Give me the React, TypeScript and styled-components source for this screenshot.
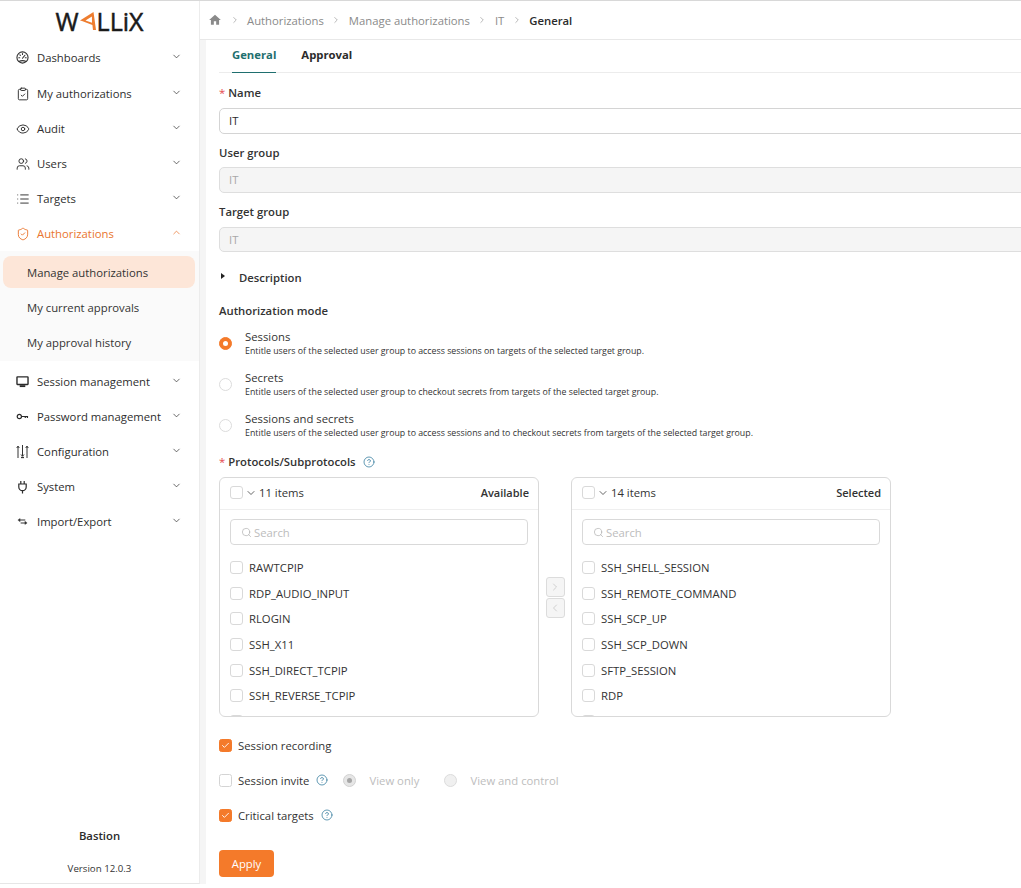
import React from "react";
import styled, { createGlobalStyle } from "styled-components";
import { ChevronDown, ChevronUp, ChevronRight, ChevronLeft, ClipboardCheck, Eye, Users, List, ShieldCheck, Search as SearchIcon, CircleHelp, Check } from "lucide-react";
import { MdHome } from "react-icons/md";

const Global = createGlobalStyle`
  html, body { margin: 0; padding: 0; background: #fff; }
  body { font-family: "Open Sans", "Liberation Sans", sans-serif; font-size: 11px; color: #2b2b2b; overflow: hidden; }
  * { box-sizing: border-box; }
`;

const Page = styled.div`
  width: 1021px; height: 888px; display: flex; overflow: hidden; border-top: 1px solid #d8d8d8;
`;
const Sidebar = styled.aside`
  width: 200px; flex: none; height: 883px; display: flex; flex-direction: column; background: #fff;
  border-bottom: 1px solid #e6e6e6; border-right: 1px solid #ececec;
`;
const LogoBox = styled.div`
  height: 39px; display: flex; align-items: center; justify-content: center;
`;
const LogoText = styled.span`
  font-family: "Open Sans", sans-serif; font-size: 25px; line-height: 30px; font-weight: 400; color: #1a1a1a;
  -webkit-text-stroke: 0.5px #1a1a1a;
`;
const Menu = styled.nav`
  display: flex; flex-direction: column;
`;
const MenuRow = styled.div<{ $active?: boolean }>`
  height: 35px; display: flex; align-items: center; padding: 0 17px 0 16px; gap: 8px;
  font-size: 11.3px; color: ${(p) => (p.$active ? "#e9752e" : "#2e2e2e")};
  svg { flex: none; }
  &:first-child { height: 36px; padding-bottom: 2px; }
`;
const IconSlot = styled.span`
  width: 13px; flex: none; display: flex; justify-content: center;
`;
const ChevronSlot = styled.span`
  display: flex; margin-top: -2px;
`;
const RowLabel = styled.span`
  flex: 1; white-space: nowrap;
`;
const SubMenu = styled.div`
  background: #fafafa; padding: 5px 4px 0 3px; height: 110px; margin-bottom: 3px; display: flex; flex-direction: column;
`;
const SubItem = styled.div<{ $active?: boolean }>`
  flex: none; height: ${(p) => (p.$active ? "32px" : "35px")};
  margin-bottom: ${(p) => (p.$active ? "2px" : "0")};
  display: flex; align-items: center; padding-left: 24px; font-size: 11.3px; color: #333;
  border-radius: 8px; background: ${(p) => (p.$active ? "#fde6d8" : "transparent")};
  padding-top: ${(p) => (p.$active ? "1px" : "0")};
`;
const SidebarFoot = styled.div`
  margin-top: auto; display: flex; flex-direction: column; align-items: center; padding-bottom: 7px;
`;
const Product = styled.div`
  font-size: 11.3px; font-weight: 600; color: #2b2b2b; height: 17px; line-height: 17px;
`;
const Version = styled.div`
  font-size: 9.7px; color: #333; margin-top: 18px; height: 14px; line-height: 14px;
`;
const Main = styled.main`
  flex: 1; min-width: 0; height: 883px; display: flex; flex-direction: column; background: #f5f5f5; overflow: hidden;
`;
const Breadcrumb = styled.header`
  height: 39px; flex: none; background: #fff; border-bottom: 1px solid #e8e8e8; display: flex; align-items: center;
  padding-left: 8px; font-size: 11.3px; color: #8a8a8a;
`;
const CrumbSep = styled.span`
  display: flex; width: 25px; justify-content: center; color: #8f8f8f;
`;
const Current = styled.span`
  color: #2b2b2b; font-weight: 600;
`;
const Content = styled.div`
  flex: 1; margin-left: 6px; background: #fff; padding-left: 13px; overflow: hidden; display: flex; flex-direction: column;
`;
const Tabs = styled.div`
  height: 33px; flex: none; display: flex; border-bottom: 1px solid #ececec; padding-left: 13px; gap: 25px; font-weight: 700; font-size: 11.3px;
`;
const Tab = styled.div<{ $active?: boolean }>`
  height: 33px; line-height: 29px; color: ${(p) => (p.$active ? "#1f6f6f" : "#2b2b2b")};
  border-bottom: 1px solid ${(p) => (p.$active ? "#1f6f6f" : "transparent")};
`;
const Label = styled.div<{ $top: number }>`
  font-weight: 600; font-size: 11.3px; color: #333; margin-top: ${(p) => p.$top}px; height: 16px; line-height: 16px; display: flex; align-items: center; white-space: nowrap; flex: none;
`;
const Star = styled.span`
  color: #e5484d; margin-right: 3px; font-weight: 400;
`;
const TextInput = styled.div<{ $disabled?: boolean; $top: number; $h?: number }>`
  margin-top: ${(p) => p.$top}px; height: ${(p) => p.$h ?? 26}px; width: 812px; flex: none; border: 1px solid ${(p) => (p.$disabled ? "#dedede" : "#d4d4d4")}; border-radius: 5px; padding-left: 9px;
  line-height: ${(p) => (p.$h ?? 26) - 2}px; font-size: 11.3px;
  color: ${(p) => (p.$disabled ? "#a8a8a8" : "#2b2b2b")}; background: ${(p) => (p.$disabled ? "#f5f5f5" : "#fff")};
`;
const Disclosure = styled.div`
  margin-top: 17px; height: 16px; flex: none; display: flex; align-items: center; font-weight: 600; font-size: 11.3px; color: #333;
`;
const Caret = styled.span`
  width: 0; height: 0; border-left: 4px solid #222; border-top: 3px solid transparent; border-bottom: 3px solid transparent; margin: 0 14px 2px 2px;
`;
const RadioGroup = styled.div`
  display: flex; flex-direction: column; margin-top: 10px; gap: 11px; flex: none;
`;
const RadioRow = styled.div`
  display: flex; align-items: center; gap: 13px; height: 30px;
`;
const RadioDot = styled.span<{ $on?: boolean; $disabled?: boolean }>`
  width: 13px; height: 13px; flex: none; border-radius: 50%; margin-top: -2px;
  background: ${(p) => (p.$on ? (p.$disabled ? "#e6e6e6" : "#f47a2a") : p.$disabled ? "#f0f0f0" : "#fff")};
  border: 1px solid ${(p) => (p.$on ? (p.$disabled ? "#d2d2d2" : "#f47a2a") : "#dcdcdc")};
  display: flex; align-items: center; justify-content: center;
  &::after {
    content: ""; display: ${(p) => (p.$on ? "block" : "none")}; width: 5px; height: 5px; border-radius: 50%;
    background: ${(p) => (p.$disabled ? "#a6a6a6" : "#fff")};
  }
`;
const RadioText = styled.div`
  display: flex; flex-direction: column;
`;
const RadioTitle = styled.span`
  font-size: 11.3px; line-height: 15px; color: #333;
`;
const RadioDesc = styled.span`
  font-size: 8.8px; line-height: 15px; color: #333; white-space: nowrap;
`;
const Help = styled(CircleHelp)`
  color: #1f6f93; margin-left: 7px;
`;
const Transfer = styled.div`
  display: flex; align-items: center; margin-top: 7px; flex: none;
`;
const Panel = styled.div`
  width: 320px; height: 240px; flex: none; border: 1px solid #d9d9d9; border-radius: 6px; overflow: hidden; display: flex; flex-direction: column;
`;
const PanelHead = styled.div`
  height: 32px; flex: none; border-bottom: 1px solid #efefef; display: flex; align-items: center; padding: 0 9px 2px 10px; font-size: 11.3px; color: #333;
`;
const Box = styled.span`
  width: 13px; height: 13px; flex: none; border: 1px solid #d9d9d9; border-radius: 3px; background: #fff; display: inline-flex;
`;
const Count = styled.span`
  display: flex; align-items: center; gap: 2px; margin-left: 2px; flex: 1;
`;
const PanelTitle = styled.span`
  font-weight: 600; font-size: 11px;
`;
const SearchBox = styled.div`
  margin: 9px 10px 0; height: 26px; flex: none; border: 1px solid #d9d9d9; border-radius: 4px; display: flex; align-items: center; gap: 2px; padding-left: 10px; color: #bcbcbc; font-size: 11.3px;
`;
const ItemList = styled.div`
  margin-top: 10px; display: flex; flex-direction: column; padding-left: 10px;
`;
const Item = styled.div`
  height: 25.6px; flex: none; display: flex; align-items: center; gap: 6px; font-size: 11.3px; color: #333; white-space: nowrap;
`;
const MoveButtons = styled.div`
  width: 32px; flex: none; display: flex; flex-direction: column; align-items: center; gap: 1px; padding-top: 1px;
`;
const MoveButton = styled.span`
  width: 19px; height: 20px; border: 1px solid #dcdcdc; border-radius: 3px; background: #f5f5f5; display: flex; align-items: center; justify-content: center; color: #b5b5b5;
`;
const OptionRow = styled.div<{ $top: number }>`
  margin-top: ${(p) => p.$top}px; height: 16px; flex: none; display: flex; align-items: center; font-size: 11.3px; color: #333; white-space: nowrap;
`;
const CheckBox = styled.span<{ $on?: boolean }>`
  width: 13px; height: 13px; flex: none; border-radius: 2.5px; margin-right: 6px;
  background: ${(p) => (p.$on ? "#f47a2a" : "#fff")}; border: 1px solid ${(p) => (p.$on ? "#f47a2a" : "#d4d4d4")};
  display: flex; align-items: center; justify-content: center; color: #fff;
`;
const Muted = styled.span<{ $w: number }>`
  color: #bdbdbd; margin-left: 13px; width: ${(p) => p.$w}px;
`;
const GapDot = styled(RadioDot)`
  margin-top: 0; margin-left: 15px;
`;
const GapDotWide = styled(RadioDot)`
  margin-top: 0; margin-left: 0;
`;
const ApplyButton = styled.button`
  margin-top: 27px; width: 55px; height: 27px; flex: none; border: none; border-radius: 4px; background: #f47a2a; color: #fff; font: 400 11.3px "Open Sans", sans-serif; padding: 0;
`;

const GaugeIcon = () => (
  <svg width="13" height="13" viewBox="0 0 14 14" fill="none" stroke="#333" strokeWidth="1.2">
    <circle cx="7" cy="7" r="6" />
    <path d="M7 7.800 9.600 4.600M3 7.200h1M10 7.200h1M4.200 4.200l.5.500M7 2.800v1" strokeLinecap="round" />
    <path d="M3 11.300c2.500-1.200 5.500-1.200 8 0" />
  </svg>
);
const MonitorIcon = () => (
  <svg width="13" height="13" viewBox="0 0 14 14" fill="#2b2b2b">
    <path fillRule="evenodd" d="M1.500 1.300h11a1.200 1.200 0 0 1 1.200 1.200v7.300a1.200 1.200 0 0 1-1.200 1.200h-11a1.200 1.200 0 0 1-1.200-1.200V2.500a1.200 1.200 0 0 1 1.200-1.200Zm.3 1.500v6.700h10.400V2.800Z" />
    <rect x="4" y="11" width="6" height="2" />
  </svg>
);
const KeyIcon = () => (
  <svg width="13" height="13" viewBox="0 0 14 14" fill="none" stroke="#2b2b2b" strokeWidth="1.300">
    <circle cx="3.600" cy="7" r="2.300" />
    <path d="M6 7h7M10 7v1.500M12.300 7v1.500" />
  </svg>
);
const SlidersIcon = () => (
  <svg width="13" height="15" viewBox="0 0 13 15" fill="none" stroke="#333" strokeWidth="1">
    <path d="M2 2v12M6.500 1v11M11 2v12" />
    <path d="M.7 4 2 2.200 3.300 4M5 10.500l1.500 1.800L8 10.500M9.700 4 11 2.200 12.300 4" />
    <path d="M5 13.500h3" strokeWidth="1.300" />
  </svg>
);
const PlugIcon = () => (
  <svg width="13" height="14" viewBox="0 0 13 14" fill="none" stroke="#2b2b2b" strokeWidth="1.200">
    <path d="M2.800 4h7.400v3a3.700 3.700 0 0 1-7.400 0ZM4.800 1v3M8.200 1v3M6.500 10.700V13.500" />
  </svg>
);
const TransferIcon = () => (
  <svg width="13" height="13" viewBox="0 0 14 14" fill="#333" stroke="#333" strokeWidth="1.100">
    <path d="M4 5.500h6M5 8.500h6" />
    <path d="M4.400 3.700V7.300L2 5.500ZM9.600 6.700v3.600L12 8.500Z" strokeWidth="0.400" />
  </svg>
);

const ic = { size: 14, strokeWidth: 1.6, color: "#2b2b2b" };
const chevron = { size: 11, strokeWidth: 1.6, color: "#333" };

const before = [
  { label: "Dashboards", icon: <GaugeIcon /> },
  { label: "My authorizations", icon: <ClipboardCheck {...ic} /> },
  { label: "Audit", icon: <Eye {...ic} /> },
  { label: "Users", icon: <Users {...ic} /> },
  { label: "Targets", icon: <List {...ic} /> },
];
const after = [
  { label: "Session management", icon: <MonitorIcon /> },
  { label: "Password management", icon: <KeyIcon /> },
  { label: "Configuration", icon: <SlidersIcon /> },
  { label: "System", icon: <PlugIcon /> },
  { label: "Import/Export", icon: <TransferIcon /> },
];
const available = ["RAWTCPIP", "RDP_AUDIO_INPUT", "RLOGIN", "SSH_X11", "SSH_DIRECT_TCPIP", "SSH_REVERSE_TCPIP", ""];
const selected = ["SSH_SHELL_SESSION", "SSH_REMOTE_COMMAND", "SSH_SCP_UP", "SSH_SCP_DOWN", "SFTP_SESSION", "RDP", ""];
const modes = [
  { t: "Sessions", d: "Entitle users of the selected user group to access sessions on targets of the selected target group.", on: true },
  { t: "Secrets", d: "Entitle users of the selected user group to checkout secrets from targets of the selected target group." },
  { t: "Sessions and secrets", d: "Entitle users of the selected user group to access sessions and to checkout secrets from targets of the selected target group." },
];

const Row = ({ label, icon, active }: { label: string; icon: React.ReactNode; active?: boolean }) => (
  <MenuRow $active={active}>
    <IconSlot>{icon}</IconSlot>
    <RowLabel>{label}</RowLabel>
    <ChevronSlot>
      {active ? <ChevronUp size={11} strokeWidth={1.6} color="#e9752e" /> : <ChevronDown {...chevron} />}
    </ChevronSlot>
  </MenuRow>
);

const TransferPanel = ({ count, title, items }: { count: string; title: string; items: string[] }) => (
  <Panel>
    <PanelHead>
      <Box />
      <Count>
        <ChevronDown size={12} strokeWidth={1.5} color="#333" />
        {count}
      </Count>
      <PanelTitle>{title}</PanelTitle>
    </PanelHead>
    <SearchBox>
      <SearchIcon size={11} strokeWidth={1.4} color="#aaa" />
      Search
    </SearchBox>
    <ItemList>
      {items.map((it, i) => (
        <Item key={i}>
          <Box />
          {it}
        </Item>
      ))}
    </ItemList>
  </Panel>
);

export default function App() {
  return (
    <>
      <Global />
      <Page>
        <Sidebar>
          <LogoBox>
            <LogoText>W</LogoText>
            <svg width="18" height="20" viewBox="0 0 18 20" fill="#ee7d2f">
              <path d="M14.500 1 17 19h-3l-.6-5L3 10 1 9.500ZM12.900 5.500 6.500 9.600 13 11.800Z" />
            </svg>
            <LogoText>LLiX</LogoText>
          </LogoBox>
          <Menu>
            {before.map((m) => (
              <Row key={m.label} {...m} />
            ))}
            <Row label="Authorizations" icon={<ShieldCheck {...ic} color="#e9752e" />} active />
            <SubMenu>
              <SubItem $active>Manage authorizations</SubItem>
              <SubItem>My current approvals</SubItem>
              <SubItem>My approval history</SubItem>
            </SubMenu>
            {after.map((m) => (
              <Row key={m.label} {...m} />
            ))}
          </Menu>
          <SidebarFoot>
            <Product>Bastion</Product>
            <Version>Version 12.0.3</Version>
          </SidebarFoot>
        </Sidebar>
        <Main>
          <Breadcrumb>
            <MdHome size={14} color="#8a8a8a" />
            <CrumbSep><ChevronRight size={10} strokeWidth={1.5} /></CrumbSep>
            <span>Authorizations</span>
            <CrumbSep><ChevronRight size={10} strokeWidth={1.5} /></CrumbSep>
            <span>Manage authorizations</span>
            <CrumbSep><ChevronRight size={10} strokeWidth={1.5} /></CrumbSep>
            <span>IT</span>
            <CrumbSep><ChevronRight size={10} strokeWidth={1.5} /></CrumbSep>
            <Current>General</Current>
          </Breadcrumb>
          <Content>
            <Tabs>
              <Tab $active>General</Tab>
              <Tab>Approval</Tab>
            </Tabs>
            <Label $top={12}><Star>*</Star>Name</Label>
            <TextInput $top={7}>IT</TextInput>
            <Label $top={11}>User group</Label>
            <TextInput $top={6} $disabled>IT</TextInput>
            <Label $top={11}>Target group</Label>
            <TextInput $top={7} $disabled $h={25}>IT</TextInput>
            <Disclosure>
              <Caret />Description
            </Disclosure>
            <Label $top={18}>Authorization mode</Label>
            <RadioGroup>
              {modes.map((m) => (
                <RadioRow key={m.t}>
                  <RadioDot $on={m.on} />
                  <RadioText>
                    <RadioTitle>{m.t}</RadioTitle>
                    <RadioDesc>{m.d}</RadioDesc>
                  </RadioText>
                </RadioRow>
              ))}
            </RadioGroup>
            <Label $top={13}><Star>*</Star>Protocols/Subprotocols<Help size={12} strokeWidth={1.4} /></Label>
            <Transfer>
              <TransferPanel count="11 items" title="Available" items={available} />
              <MoveButtons>
                <MoveButton><ChevronRight size={12} strokeWidth={1.2} /></MoveButton>
                <MoveButton><ChevronLeft size={12} strokeWidth={1.2} /></MoveButton>
              </MoveButtons>
              <TransferPanel count="14 items" title="Selected" items={selected} />
            </Transfer>
            <OptionRow $top={20}><CheckBox $on><Check size={9} strokeWidth={2.4} /></CheckBox>Session recording</OptionRow>
            <OptionRow $top={19}>
              <CheckBox />Session invite<Help size={12} strokeWidth={1.4} />
              <GapDot $on $disabled />
              <Muted $w={75}>View only</Muted>
              <GapDotWide $disabled />
              <Muted $w={110}>View and control</Muted>
            </OptionRow>
            <OptionRow $top={19}><CheckBox $on><Check size={9} strokeWidth={2.4} /></CheckBox>Critical targets<Help size={12} strokeWidth={1.4} /></OptionRow>
            <ApplyButton>Apply</ApplyButton>
          </Content>
        </Main>
      </Page>
    </>
  );
}
